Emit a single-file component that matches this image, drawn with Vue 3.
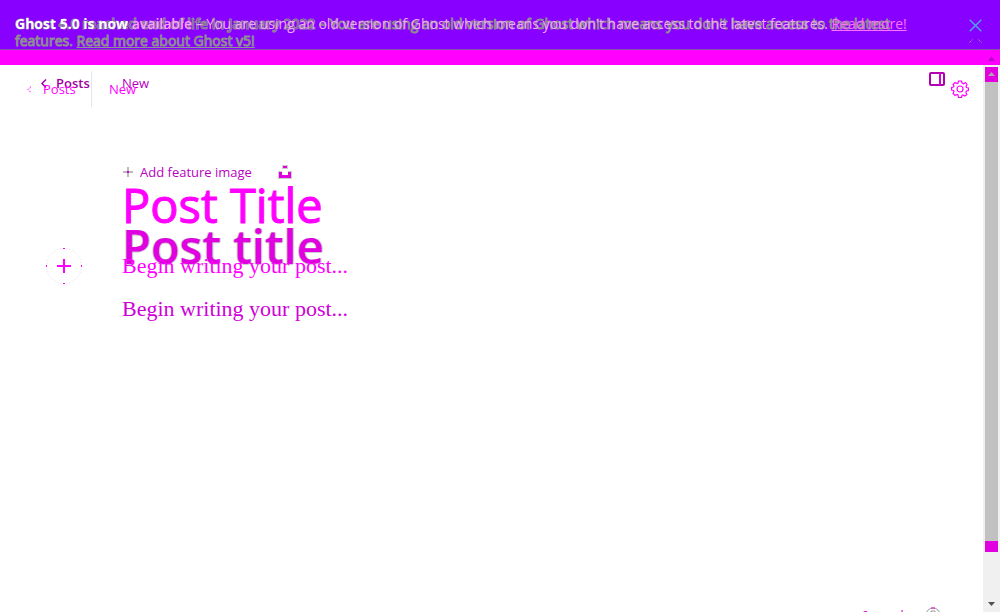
<script setup>
import { ref } from 'vue'

const plainTitle = ref('')
const boldTitle = ref('')
const firstBody = ref('')
const secondBody = ref('')
</script>

<template>
  <div class="screen">
    <header class="banner">
      <p class="notice earlier"><b>Ghost 4.0 reached end of life in January 2022</b> – You are using an old version of Ghost which means you don't have access to the latest features. <a href="#v5">Read more about Ghost v5!</a></p>
      <p class="notice current"><b>Ghost 5.0 is now <span class="tint">available</span></b> <span class="mixed">– You are using an old version of Ghost which means you don't have access to the latest features.</span> <a href="#more">Read more!</a></p>
      <div class="closes">
        <button class="close" aria-label="Close notice">
          <svg width="13" height="13" viewBox="0 0 13 13"><path d="M.7.7l11.6 11.6M12.3.7L.7 12.3" stroke="#48a8f0" stroke-width="1.4" /></svg>
        </button>
        <svg class="echo" width="13" height="5" viewBox="0 0 13 5"><path d="M.5 4.5l3-3M9.5 1.5l3 3" stroke="#999" stroke-dasharray="2 1" /></svg>
      </div>
    </header>
    <div class="stripe"><span></span></div>

    <div class="body">
      <main class="canvas">
        <section class="layer bold-layer">
          <nav class="bar">
            <a href="#posts" class="back">
              <svg width="6" height="9" viewBox="0 0 6 9"><path d="M5 .5l-4 4 4 4" fill="none" stroke="#a000a0" stroke-width="1.5" /></svg>
              Posts
            </a>
            <span class="crumb">New</span>
            <button class="panel" aria-label="Toggle settings panel">
              <svg width="16" height="14" viewBox="0 0 16 14"><rect x="1" y="1" width="14" height="12" rx="1" fill="none" stroke="#b000b0" stroke-width="2" /><path d="M11 1v12" stroke="#d000d0" stroke-width="2" /></svg>
            </button>
          </nav>
          <div class="feature">
            <button class="add">
              <svg width="10" height="10" viewBox="0 0 10 10"><path d="M5 0v10M0 5h10" stroke="#bbb" stroke-width="2" /><path d="M4 5h2" stroke="#d000d0" stroke-width="2" /></svg>
              Add feature image
            </button>
            <button class="unsplash" aria-label="Choose a photo">
              <svg width="14" height="14" viewBox="0 0 14 14"><path d="M4 0h6v4H4zM0 6h4v4h6V6h4v8H0z" fill="#ccc" /><path d="M5 1h4v2H5zM1 7h3v3h6V7h3v6H1z" fill="#e000e0" /></svg>
            </button>
          </div>
          <input v-model="boldTitle" class="title strong" placeholder="Post title" aria-label="Bold post title" />
          <textarea v-model="secondBody" class="prose deep" rows="1" placeholder="Begin writing your post..." aria-label="Post body"></textarea>
        </section>

        <section class="layer plain-layer">
          <nav class="bar">
            <a href="#all" class="back">
              <svg width="5" height="7" viewBox="0 0 5 7"><path d="M4 .5l-3 3 3 3" fill="none" stroke="#f0f" stroke-dasharray="2 1" /></svg>
              Posts
            </a>
            <span class="divider"></span>
            <span class="crumb">New</span>
            <button class="gear" aria-label="Settings">
              <svg width="18" height="18" viewBox="0 0 18 18" fill="none" stroke="#f0f" stroke-width="1.2"><path d="M7 3L7.500 1h3L11 3l1.500.7L14.500 2.500l1.500 2-1 2 .5 1 1.900.5v2.500l-2 .5-.5 1.500 1 2-2 1.500-1.900-1-1 .5-.5 2h-3L7 15l-1-.5-2 1L2 13.500l1-2L2.500 10.500.6 10V7.500l1.900-.5.5-1-1-1.500L4 2.500l2 1z" /><circle cx="9" cy="9" r="3" /></svg>
            </button>
          </nav>
          <input v-model="plainTitle" class="title plain" placeholder="Post Title" aria-label="Post title" />
          <div class="writer">
            <button class="insert" aria-label="Add a card">
              <svg width="38" height="38" viewBox="0 0 38 38"><circle cx="19" cy="19" r="17.500" fill="none" stroke="#ddd" stroke-dasharray="1 2" /><path d="M18 1.500h2M18 36.500h2M1.500 18v2M36.500 18v2" stroke="#f0f" /><path d="M19 12v14M12 19h14" stroke="#f0f" stroke-width="2" /></svg>
            </button>
            <textarea v-model="firstBody" class="prose" rows="1" placeholder="Begin writing your post..." aria-label="Post content"></textarea>
          </div>
        </section>
        <footer class="status">
          <span>0 words</span>
          <svg width="16" height="16" viewBox="0 0 16 16" fill="none" stroke="#999"><circle cx="8" cy="8" r="7" /><path d="M6 1h4" stroke="#e000e0" /><path d="M6 6V4h4v3L8 9v3" /></svg>
        </footer>
      </main>
      <aside class="track" aria-hidden="true">
        <div class="thumb"><span class="up"></span></div>
        <span class="down"></span>
      </aside>
    </div>
  </div>
</template>

<style>
body {
  margin: 0;
  background: #fff;
}
</style>

<style scoped>
.screen {
  display: flex;
  flex-direction: column;
  height: 100vh;
  overflow: hidden;
  font: 13px/18px "Open Sans", "Noto Sans", sans-serif;
}
button, input, textarea {
  margin: 0;
  padding: 0;
  border: 0;
  outline: 0;
  background: none;
  font: inherit;
  color: inherit;
}
svg {
  display: block;
  flex: none;
}
.banner {
  display: grid;
  grid-template-columns: 1fr 32px;
  flex: none;
  box-sizing: border-box;
  padding: 15px 0 0 15px;
  background: #8800ff;
  box-shadow: 0 1px #8855aa;
  position: relative;
}
.notice {
  grid-area: 1 / 1;
  margin: 0;
  font-size: 14px;
  line-height: 17px;
}
.notice a {
  color: inherit;
}
.notice b {
  font-weight: 600;
}
.earlier {
  padding-right: 44px;
  color: #8800ff;
  -webkit-text-stroke: 1px #909090;
}
.earlier a {
  text-decoration-color: #909090;
}
.current {
  color: #fff;
  white-space: nowrap;
}
.current b {
  font-weight: 700;
}
.tint {
  font-weight: 600;
  color: #ffa0ff;
}
.mixed {
  color: #f0a8f8;
}
.current a {
  color: #ff70ff;
}
.closes {
  grid-area: 1 / 2;
  padding: 3px 0 0 1px;
}
.echo {
  margin-top: 2px;
}
.stripe {
  display: flex;
  justify-content: flex-end;
  flex: none;
  height: 16px;
  background: #ff00ff;
}
.stripe span {
  width: 17px;
  background: #bb00cc;
  clip-path: polygon(30% 75%, 50% 45%, 70% 75%);
}
.body {
  display: flex;
  flex: 1;
  min-height: 0;
}
.canvas {
  display: grid;
  grid-template-rows: 1fr;
  flex: 1;
  min-width: 0;
  overflow: hidden;
}
.layer {
  grid-area: 1 / 1;
  display: flex;
  flex-direction: column;
  min-width: 0;
  pointer-events: none;
}
.layer a, .layer button, .layer input, .layer textarea {
  pointer-events: auto;
}
.bar, .back, .feature, .add {
  display: flex;
  align-items: center;
}
.back {
  text-decoration: none;
  color: inherit;
}
.bold-layer {
  color: #b800c0;
}
.bold-layer .bar {
  height: 36px;
  padding: 0 38px 0 41px;
}
.bold-layer .back {
  gap: 9px;
  width: 81px;
  font-weight: 600;
  color: #a000a0;
}
.panel {
  margin: 0 0 8px auto;
}
.plain-layer {
  color: #ff00ff;
}
.plain-layer .bar {
  height: 48px;
  padding: 0 14px 0 27px;
}
.plain-layer .back {
  gap: 11px;
  width: 64px;
}
.divider {
  width: 1px;
  height: 36px;
  margin: 0 17px 0 0;
  background: #dde8f0;
}
.gear {
  margin-left: auto;
}
.feature {
  gap: 26px;
  height: 18px;
  margin: 62px 0 0 123px;
}
.add {
  gap: 7px;
}
.title {
  width: calc(100% - 244px);
  height: 64px;
  margin: 60px 0 0 122px;
  font-size: 47px;
  line-height: 64px;
}
.title::placeholder, .prose::placeholder {
  color: inherit;
  opacity: 1;
}
.plain {
  -webkit-text-stroke: 1px #ff00ff;
}
.strong {
  margin-top: 33px;
  font-weight: 600;
  color: #e000e0;
  text-shadow: 1px 0 #ccc, -1px 0 #ccc, 0 1px #ccc;
}
.prose {
  display: block;
  flex: none;
  width: calc(100% - 244px);
  height: 32px;
  margin-left: 122px;
  font: 22px/32px "Liberation Serif", serif;
  resize: none;
  overflow: hidden;
}
.deep {
  margin-top: 15px;
  color: #d000d8;
}
.writer {
  display: flex;
  align-items: center;
  margin-top: 10px;
}
.insert {
  margin-left: 45px;
}
.writer .prose {
  margin-left: 39px;
}
.status {
  grid-area: 1 / 1;
  align-self: end;
  justify-self: end;
  display: flex;
  align-items: center;
  gap: 15px;
  margin: 0 42px -12px 0;
  color: #d000d0;
}
.track {
  display: flex;
  flex-direction: column;
  align-items: center;
  justify-content: space-between;
  width: 17px;
  box-sizing: border-box;
  padding: 2px 0 6px;
  background: #f0f0f0;
}
.thumb {
  width: 13px;
  height: 90%;
  background: linear-gradient(#e000e0 15px, #c1c1c1 15px, #c1c1c1 calc(100% - 11px), #e000e0 calc(100% - 11px));
}
.up, .down {
  display: block;
  width: 7px;
  height: 4px;
  background: #aaa;
  clip-path: polygon(0 100%, 50% 0, 100% 100%);
}
.up {
  margin: 5px auto 0;
}
.down {
  background: #505050;
  clip-path: polygon(0 0, 100% 0, 50% 100%);
}
</style>
